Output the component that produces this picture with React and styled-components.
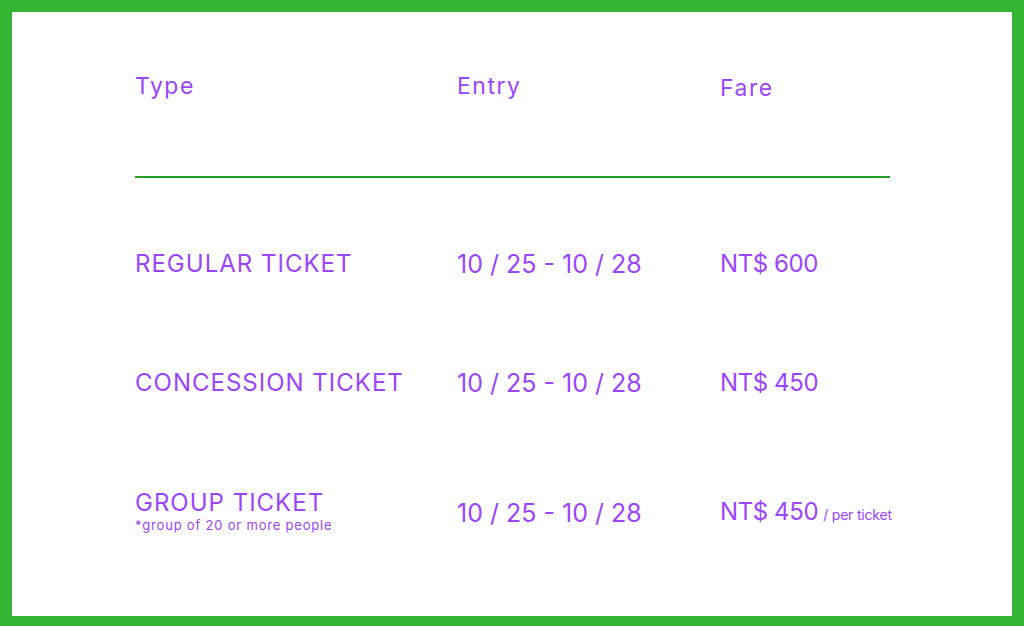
import React from 'react';
import styled, { createGlobalStyle } from 'styled-components';

const GlobalStyle = createGlobalStyle`
  html, body {
    margin: 0;
    padding: 0;
    background: #34b634;
  }
  body {
    font-family: Inter, "Noto Sans", sans-serif;
  }
`;

const Frame = styled.div`
  box-sizing: border-box;
  width: 1024px;
  height: 626px;
  padding: 12px 12px 10px;
`;

const Sheet = styled.div`
  box-sizing: border-box;
  height: 100%;
  background: #ffffff;
  padding: 58px 0 0 123px;
  color: #9b45ff;
`;

const Table = styled.div`
  width: 755px;
`;

const Head = styled.div`
  display: grid;
  grid-template-columns: 322px 263px 1fr;
  height: 106px;
  border-bottom: 2px solid #23a023;
`;

const HeadCell = styled.div`
  font-size: 23px;
  letter-spacing: 1.5px;
  line-height: 32px;
  margin-top: ${p => p.offset || 0}px;
`;

const Row = styled.div`
  display: grid;
  grid-template-columns: 322px 263px 1fr;
  align-items: center;
  height: ${p => p.height}px;
`;

const TypeName = styled.div`
  font-size: 24px;
  letter-spacing: 1px;
  line-height: 28px;
`;

const Note = styled.div`
  font-size: 13px;
  letter-spacing: 0.8px;
  line-height: 16px;
`;

const Entry = styled.div`
  font-size: 25px;
  line-height: 30px;
  white-space: nowrap;
  margin-top: ${p => p.offset || 0}px;
`;

const Fare = styled(Entry)`
  font-size: 24px;
  letter-spacing: -0.4px;
`;

const Per = styled.span`
  font-size: 14px;
  letter-spacing: -0.2px;
  margin-left: 5px;
`;

const tickets = [
  { name: 'REGULAR TICKET', entry: '10 / 25 - 10 / 28', fare: 'NT$ 600', height: 172 },
  { name: 'CONCESSION TICKET', entry: '10 / 25 - 10 / 28', fare: 'NT$ 450', height: 66 },
  {
    name: 'GROUP TICKET',
    note: '*group of 20 or more people',
    entry: '10 / 25 - 10 / 28',
    fare: 'NT$ 450',
    per: '/ per ticket',
    height: 190,
  },
];

export default function App() {
  return (
    <Frame>
      <GlobalStyle />
      <Sheet>
        <Table>
          <Head>
            <HeadCell>Type</HeadCell>
            <HeadCell>Entry</HeadCell>
            <HeadCell offset={2}>Fare</HeadCell>
          </Head>
          {tickets.map(t => (
            <Row key={t.name} height={t.height}>
              <div>
                <TypeName>{t.name}</TypeName>
                {t.note && <Note>{t.note}</Note>}
              </div>
              <Entry offset={t.note ? 4 : 0}>{t.entry}</Entry>
              <Fare offset={t.note ? 4 : 0}>
                {t.fare}
                {t.per && <Per>{t.per}</Per>}
              </Fare>
            </Row>
          ))}
        </Table>
      </Sheet>
    </Frame>
  );
}
